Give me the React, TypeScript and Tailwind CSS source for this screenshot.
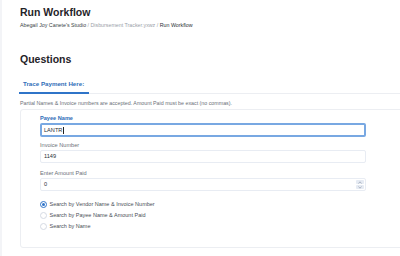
import React from "react";

const font = { fontFamily: '"Liberation Sans", Arial, sans-serif' };

function Radio({ checked, label }: { checked?: boolean; label: string }) {
  return (
    <label className="flex items-center gap-[3px] h-[11px]">
      <span
        className={
          "w-[6.5px] h-[6.5px] rounded-full border flex items-center justify-center " +
          (checked ? "border-[#2f74c8] bg-white" : "border-[#d5dae3] bg-white")
        }
      >
        {checked && <span className="w-[3px] h-[3px] rounded-full bg-[#2f74c8]" />}
      </span>
      <span className="text-[5.5px] text-[#4a4f57]">{label}</span>
    </label>
  );
}

export default function App() {
  return (
    <div className="w-[400px] h-[256px] flex bg-white overflow-hidden" style={font}>
      <div className="w-[2px] bg-[#f3f4f7] shrink-0" />
      <div className="flex-1 flex flex-col pl-[18px] pt-[6px] min-w-0">
        <h1 className="text-[10.5px] leading-[12px] font-bold text-[#1f2328]">Run Workflow</h1>
        <div className="text-[5.3px] leading-[8px] mt-[3px] whitespace-nowrap">
          <span className="text-[#3a3f47]">Abegail Joy Canete's Studio</span>
          <span className="text-[#9aa0a8]"> / Disbursement Tracker.yxwz / </span>
          <span className="text-[#2a2f36]">Run Workflow</span>
        </div>
        <h2 className="text-[10.5px] leading-[12px] font-bold text-[#1f2328] mt-[24px]">Questions</h2>
        <div className="mt-[13px] border-b border-[#eceef2] -ml-[1px]">
          <div className="w-[70px] pl-[4px] pb-[4px] pt-[2px] border-b-2 border-[#2f74c8] text-[6.2px] leading-[8px] font-bold text-[#2f6db8] -mb-px">
            Trace Payment Here:
          </div>
        </div>
        <div className="mt-[5px] text-[5.3px] leading-[8px] text-[#6b7079] whitespace-nowrap">
          Partial Names &amp; Invoice numbers are accepted. Amount Paid must be exact (no commas).
        </div>
        <div className="mt-[2px] -mr-[10px] h-[139px] border border-[#eceef2] rounded-[3px] pl-[19px] pt-[4px]">
          <div className="w-[326px]">
            <div className="text-[5.6px] leading-[8px] font-bold text-[#2f6db8]">Payee Name</div>
            <div className="mt-[1px] h-[14px] border-2 border-[#78a8e2] rounded-[2px] flex items-center px-[2px] text-[5.6px] text-[#2a2f36]">
              LANTR<span className="w-[0.6px] h-[7px] bg-[#222] ml-[0.5px]" />
            </div>
            <div className="mt-[4px] text-[5.6px] leading-[8px] text-[#6b7079]">Invoice Number</div>
            <div className="mt-[1px] h-[13px] border border-[#e8ecf3] rounded-[2px] flex items-center px-[3px] text-[5.6px] text-[#2a2f36]">
              1149
            </div>
            <div className="mt-[6px] text-[5.6px] leading-[8px] text-[#6b7079]">Enter Amount Paid</div>
            <div className="mt-[1px] h-[13px] border border-[#e8ecf3] rounded-[2px] flex items-center pl-[3px] pr-[1px] text-[5.6px] text-[#2a2f36]">
              <span className="flex-1">0</span>
              <div className="flex flex-col gap-[1px]">
                <div className="w-[8px] h-[4px] bg-[#e6ebf3] rounded-[1px] flex items-center justify-center">
                  <svg width="4" height="3" viewBox="0 0 4 3"><path d="M0.5 2.5 L2 0.8 L3.5 2.5" stroke="#8a94a6" strokeWidth="0.6" fill="none" /></svg>
                </div>
                <div className="w-[8px] h-[4px] bg-[#e6ebf3] rounded-[1px] flex items-center justify-center">
                  <svg width="4" height="3" viewBox="0 0 4 3"><path d="M0.5 0.5 L2 2.2 L3.5 0.5" stroke="#8a94a6" strokeWidth="0.6" fill="none" /></svg>
                </div>
              </div>
            </div>
          </div>
          <div className="mt-[8px] flex flex-col">
            <Radio checked label="Search by Vendor Name & Invoice Number" />
            <Radio label="Search by Payee Name & Amount Paid" />
            <Radio label="Search by Name" />
          </div>
        </div>
      </div>
    </div>
  );
}
